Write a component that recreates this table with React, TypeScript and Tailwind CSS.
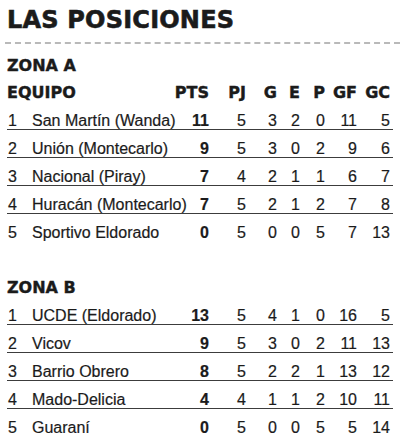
import React from 'react'

type Row = [string, number, number, number, number, number, number, number]

const ZONA_A: Row[] = [
  ['San Martín (Wanda)', 11, 5, 3, 2, 0, 11, 5],
  ['Unión (Montecarlo)', 9, 5, 3, 0, 2, 9, 6],
  ['Nacional (Piray)', 7, 4, 2, 1, 1, 6, 7],
  ['Huracán (Montecarlo)', 7, 5, 2, 1, 2, 7, 8],
  ['Sportivo Eldorado', 0, 5, 0, 0, 5, 7, 13],
]

const ZONA_B: Row[] = [
  ['UCDE (Eldorado)', 13, 5, 4, 1, 0, 16, 5],
  ['Vicov', 9, 5, 3, 0, 2, 11, 13],
  ['Barrio Obrero', 8, 5, 2, 2, 1, 13, 12],
  ['Mado-Delicia', 4, 4, 1, 1, 2, 10, 11],
  ['Guaraní', 0, 5, 0, 0, 5, 5, 14],
]

const COLS = ['w-[40px]', 'w-[37px]', 'w-[31px]', 'w-[23px]', 'w-[25px]', 'w-[32px]', 'w-[36px] pr-[3px]']
const HEADS = ['PTS', 'PJ', 'G', 'E', 'P', 'GF', 'GC']

const heavy = "font-['DejaVu_Sans',sans-serif] font-bold [-webkit-text-stroke:0.4px_#1b1b1b]"

function TeamRow({ pos, row, last }: { pos: number; row: Row; last: boolean }) {
  const [name, ...stats] = row
  return (
    <div className={`flex pt-[10px] leading-[17px] text-[16px] ${last ? 'h-[27px]' : 'border-b border-[#3c3c3c]'}`}>
      <span className="w-[25px] shrink-0 pl-[1px]">{pos}</span>
      <span className="flex-1 min-w-0 whitespace-nowrap">{name}</span>
      {stats.map((v, i) => (
        <span key={i} className={`${COLS[i]} shrink-0 text-right ${i === 0 ? 'font-bold' : ''}`}>{v}</span>
      ))}
    </div>
  )
}

export default function App() {
  return (
    <div className="w-[400px] h-[446px] bg-white text-[#1b1b1b] overflow-hidden font-['Liberation_Sans',Arial,sans-serif] [-webkit-text-stroke:0.2px_#1b1b1b]">
      <div className="pl-[7px] pr-[7px]">
        <h1 className={`${heavy} text-[24px] leading-[28px] pt-[6px] tracking-[0.2px] [-webkit-text-stroke:0.6px_#1b1b1b]`}>LAS POSICIONES</h1>
      </div>
      <div className="mt-[8px] ml-[5px] border-t-2 border-dashed border-[#b9b9b9]" />

      <div className="pl-[7px] pr-[7px]">
        <div className={`${heavy} text-[16px] leading-[19px] mt-[12px]`}>ZONA A</div>
        <div className={`${heavy} flex text-[16px] leading-[19px] mt-[8px]`}>
          <span className="flex-1">EQUIPO</span>
          {HEADS.map((h, i) => (
            <span key={h} className={`${COLS[i]} shrink-0 text-right`}>{h}</span>
          ))}
        </div>
        {ZONA_A.map((r, i) => (
          <TeamRow key={r[0]} pos={i + 1} row={r} last={i === ZONA_A.length - 1} />
        ))}

        <div className={`${heavy} text-[16px] leading-[19px] mt-[37px]`}>ZONA B</div>
        {ZONA_B.map((r, i) => (
          <TeamRow key={r[0]} pos={i + 1} row={r} last={i === ZONA_B.length - 1} />
        ))}
      </div>
    </div>
  )
}
